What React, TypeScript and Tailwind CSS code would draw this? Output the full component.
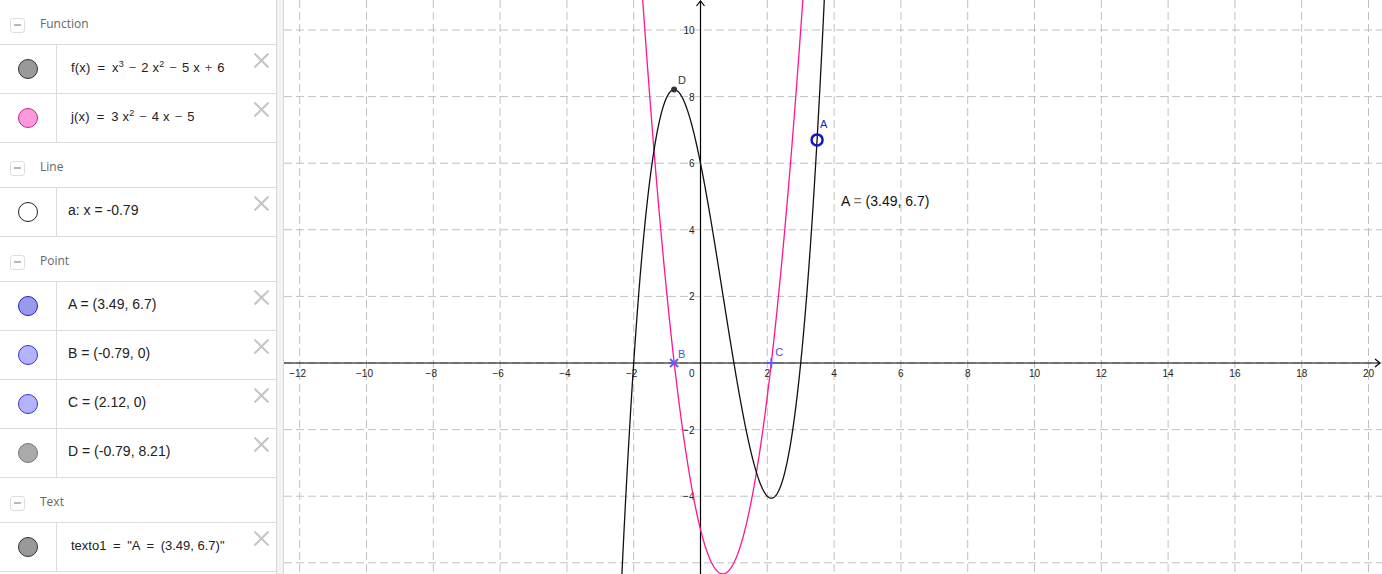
import React from 'react';

type Item = { fill: string; content: React.ReactNode };
type Section = { title: string; items: Item[] };

const sup = (s: string) => <sup className="relative -top-[5px] text-[9px] leading-none">{s}</sup>;

const sections: Section[] = [
  {
    title: 'Function',
    items: [
      {
        fill: 'bg-[#999999] border-[#333333]',
        content: (
          <span className="pl-[3px] text-[13px] tracking-[0.2px]">
            f(x) <span className="mx-[3px]">=</span> x{sup('3')} <span className="mx-[1px] text-[#555]">−</span> 2 x{sup('2')}{' '}
            <span className="mx-[1px] text-[#555]">−</span> 5 x <span className="mx-[1px] text-[#555]">+</span> 6
          </span>
        ),
      },
      {
        fill: 'bg-[#ff99dd] border-[#cc2288]',
        content: (
          <span className="pl-[3px] text-[13px] tracking-[0.2px]">
            j(x) <span className="mx-[3px]">=</span> 3 x{sup('2')} <span className="mx-[1px] text-[#555]">−</span> 4 x{' '}
            <span className="mx-[1px] text-[#555]">−</span> 5
          </span>
        ),
      },
    ],
  },
  {
    title: 'Line',
    items: [{ fill: 'bg-white border-[#222222]', content: <span className="text-[14px]">a: x = -0.79</span> }],
  },
  {
    title: 'Point',
    items: [
      { fill: 'bg-[#9999ee] border-[#2222cc]', content: <span className="text-[14px]">A = (3.49, 6.7)</span> },
      { fill: 'bg-[#b3b3ff] border-[#3333dd]', content: <span className="text-[14px]">B = (-0.79, 0)</span> },
      { fill: 'bg-[#b3b3ff] border-[#3333dd]', content: <span className="text-[14px]">C = (2.12, 0)</span> },
      { fill: 'bg-[#aaaaaa] border-[#777777]', content: <span className="text-[14px]">D = (-0.79, 8.21)</span> },
    ],
  },
  {
    title: 'Text',
    items: [
      {
        fill: 'bg-[#999999] border-[#333333]',
        content: (
          <span className="pl-[3px] text-[13px]">
            texto1 <span className="mx-[3px]">=</span> "A <span className="mx-[3px]">=</span> (3.49, 6.7)"
          </span>
        ),
      },
    ],
  },
];

const CloseIcon: React.FC = () => (
  <svg className="absolute right-[6px] top-[8px]" width="17" height="15" viewBox="0 0 17 15">
    <path d="M1.5 0.5 L15.5 14.5 M15.5 0.5 L1.5 14.5" stroke="#c4c4c4" strokeWidth="2" fill="none" />
  </svg>
);

const Header: React.FC<{ title: string }> = ({ title }) => (
  <div className="flex h-[45px] items-center border-b border-[#dcdcdc] pl-[10px] pt-[6px]">
    <div className="flex h-[15px] w-[15px] items-center justify-center rounded-[3px] border border-[#dedede]">
      <div className="h-[1.5px] w-[7px] bg-[#b8b8b8]" />
    </div>
    <span className="ml-[15px] -mt-[2px] font-['Open_Sans',sans-serif] text-[12px] text-[#666666]">{title}</span>
  </div>
);

const Row: React.FC<{ item: Item }> = ({ item }) => (
  <div className="flex h-[49px] border-b border-[#dcdcdc]">
    <div className="flex w-[57px] items-center justify-center border-r border-[#dcdcdc]">
      <span className={`block h-[20px] w-[20px] rounded-full border ${item.fill}`} />
    </div>
    <div className="relative flex flex-1 items-center pb-[3px] pl-[11px] text-[#222222]">
      {item.content}
      <CloseIcon />
    </div>
  </div>
);

// graph geometry
const X0 = 416.5;
const Y0 = 363;
const SX = 33.4;
const SY = 33.3;
const px = (x: number) => X0 + SX * x;
const py = (y: number) => Y0 - SY * y;

const curve = (f: (x: number) => number, a: number, b: number) => {
  const pts: string[] = [];
  for (let x = a; x <= b; x += 0.01) pts.push(`${px(x).toFixed(2)},${py(f(x)).toFixed(2)}`);
  return 'M' + pts.join(' L');
};

const fPath = curve((x) => x ** 3 - 2 * x ** 2 - 5 * x + 6, -2.6, 4.3);
const jPath = curve((x) => 3 * x * x - 4 * x - 5, -2, 3.5);

const xTicks = [-12, -10, -8, -6, -4, -2, 2, 4, 6, 8, 10, 12, 14, 16, 18, 20];
const yTicks = [10, 8, 6, 4, 2, -2, -4];

const Graph: React.FC = () => {
  const gridX: number[] = [];
  for (let k = -7; k <= 11; k++) gridX.push(px(k * 2));
  const gridY: number[] = [];
  for (let k = -5; k <= 6; k++) gridY.push(py(k * 2));
  const fmt = (n: number) => (n < 0 ? `−${-n}` : `${n}`);
  return (
    <svg width="1098" height="574" viewBox="0 0 1098 574" className="block">
      <g stroke="#c0c0c0" strokeWidth="1" strokeDasharray="8 4">
        {gridX.map((x) => (
          <line key={`gx${x}`} x1={x} y1={0} x2={x} y2={574} />
        ))}
        {gridY.map((y) => (
          <line key={`gy${y}`} x1={0} y1={y} x2={1098} y2={y} />
        ))}
      </g>
      {/* axes */}
      <g stroke="#000" strokeWidth="1.2" fill="none">
        <line x1={0} y1={Y0} x2={1096} y2={Y0} />
        <line x1={X0} y1={574} x2={X0} y2={1} />
        <path d={`M1091 ${Y0 - 4} L1096 ${Y0} L1091 ${Y0 + 4}`} />
        <path d={`M${X0 - 4} 6 L${X0} 1 L${X0 + 4} 6`} />
      </g>
      <g fontSize="10" fill="#222" className="font-['Liberation_Sans',sans-serif]">
        {xTicks.map((t) => (
          <text key={`xt${t}`} x={px(t) + (t < 0 ? -2 : 0)} y={377} textAnchor="middle">
            {fmt(t)}
          </text>
        ))}
        <text x={X0 - 6} y={377} textAnchor="end">
          0
        </text>
        {yTicks.map((t) => (
          <text key={`yt${t}`} x={X0 - 6} y={py(t) + 4} textAnchor="end">
            {fmt(t)}
          </text>
        ))}
      </g>
      {/* curves */}
      <path d={jPath} stroke="#ff1493" strokeWidth="1.3" fill="none" />
      <path d={fPath} stroke="#111" strokeWidth="1.3" fill="none" />
      {/* points */}
      <g stroke="#5a5aff" strokeWidth="1.8">
        <path d={`M${px(-0.79) - 4} ${Y0 - 4} L${px(-0.79) + 4} ${Y0 + 4} M${px(-0.79) + 4} ${Y0 - 4} L${px(-0.79) - 4} ${Y0 + 4}`} />
        <path d={`M${px(2.12) - 5} ${Y0} L${px(2.12) + 5} ${Y0} M${px(2.12)} ${Y0 - 5} L${px(2.12)} ${Y0 + 5}`} />
      </g>
      <g fontSize="11" className="font-['Liberation_Sans',sans-serif]">
        <text x={px(-0.79) + 4} y={Y0 - 5} fill="#5050e8">
          B
        </text>
        <text x={px(2.12) + 4} y={Y0 - 7} fill="#5050e8">
          C
        </text>
        <text x={px(-0.79) + 4} y={py(8.21) - 6} fill="#333">
          D
        </text>
        <text x={px(3.49) + 3} y={py(6.7) - 12} fill="#1a1ad0">
          A
        </text>
      </g>
      <circle cx={px(-0.79)} cy={py(8.21)} r="3" fill="#333" />
      <circle cx={px(3.49)} cy={py(6.7)} r="5.5" fill="none" stroke="#1414c8" strokeWidth="2.5" />
      <text x={557} y={206} fontSize="14" fill="#111" className="font-['Liberation_Sans',sans-serif]">
        A <tspan fill="#777">=</tspan> (3.49, 6.7)
      </text>
    </svg>
  );
};

const App: React.FC = () => {
  return (
    <div className="flex h-[574px] w-[1382px] overflow-hidden bg-white font-['Liberation_Sans',Arial,sans-serif]">
      <div className="w-[276px] shrink-0">
        {sections.map((s) => (
          <React.Fragment key={s.title}>
            <Header title={s.title} />
            {s.items.map((it, i) => (
              <Row key={i} item={it} />
            ))}
          </React.Fragment>
        ))}
      </div>
      <div className="w-[8px] shrink-0 border-x border-[#d8d8d8] bg-[#f3f3f3]" />
      <div className="relative flex-1 overflow-hidden">
        <Graph />
      </div>
    </div>
  );
};

export default App;
